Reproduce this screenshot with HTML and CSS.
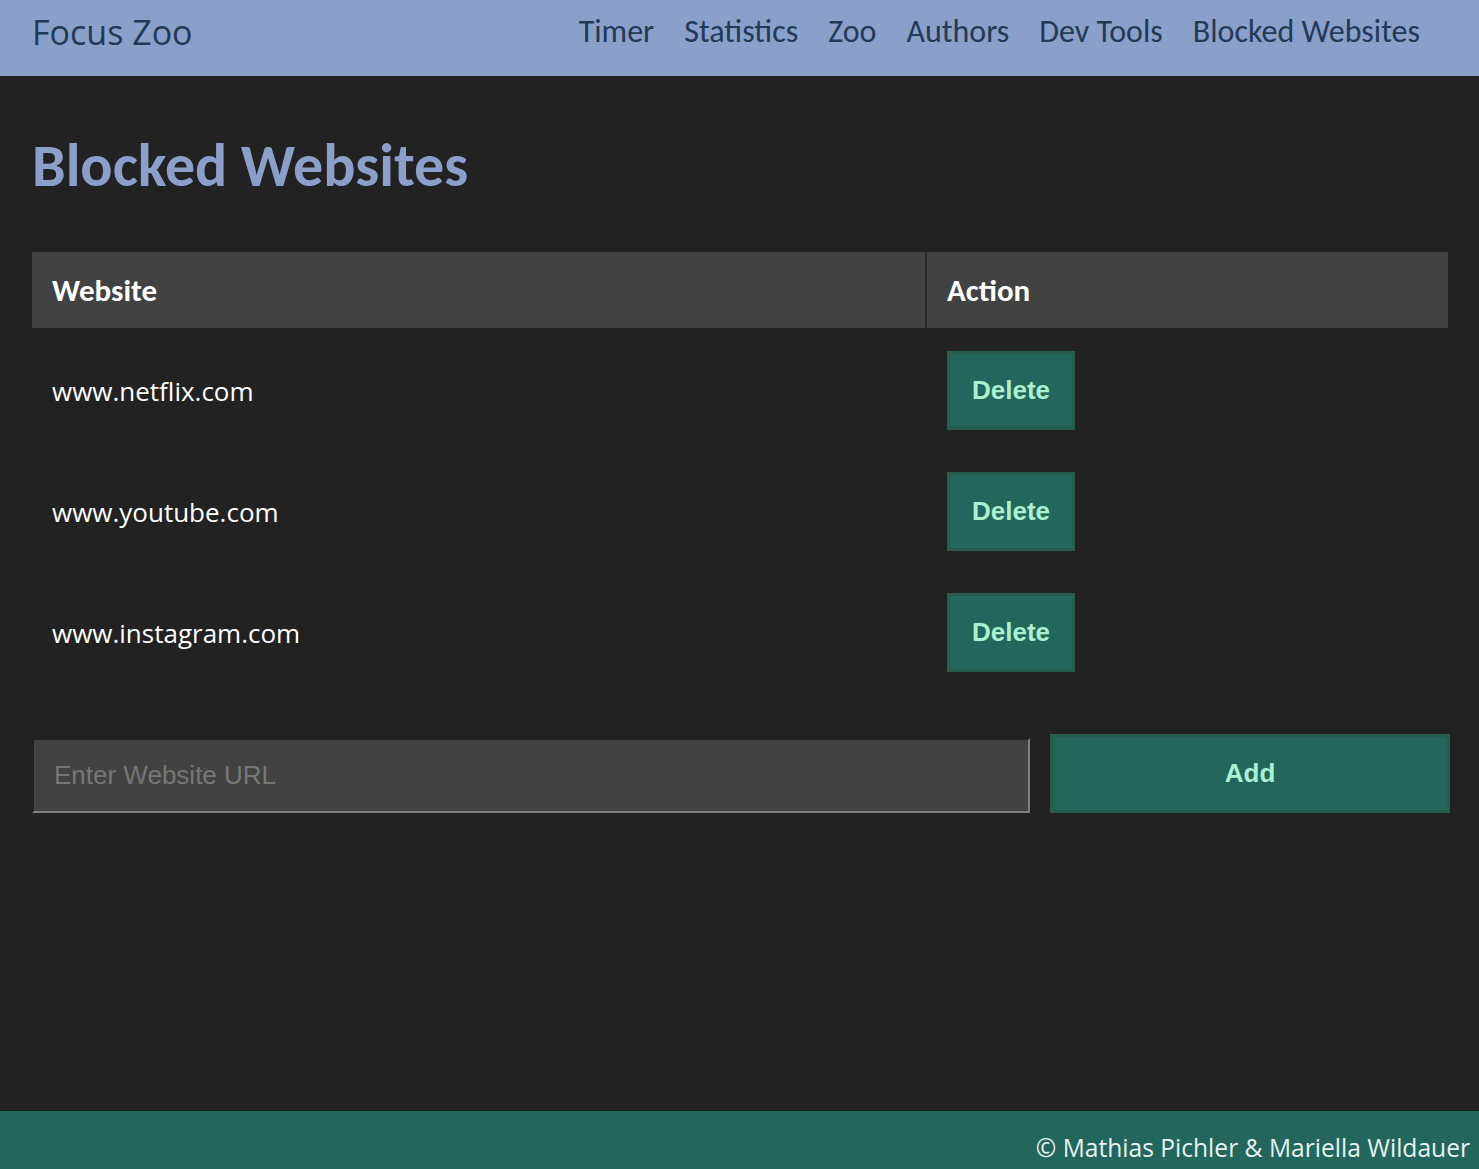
FILE: index.html
```html
<!DOCTYPE html>
<html lang="en">
<head>
<meta charset="utf-8">
<title>Focus Zoo - Blocked Websites</title>
<link rel="stylesheet" href="styles.css">
</head>
<body>
<div class="page">
  <header class="topbar">
    <div class="brand">Focus Zoo</div>
    <nav class="nav">
      <a href="#">Timer</a>
      <a href="#">Statistics</a>
      <a href="#">Zoo</a>
      <a href="#">Authors</a>
      <a href="#">Dev Tools</a>
      <a href="#">Blocked Websites</a>
    </nav>
  </header>
  <main class="content">
    <h1 class="title">Blocked Websites</h1>
    <table class="sites">
      <thead>
        <tr><th class="col-site">Website</th><th class="col-action">Action</th></tr>
      </thead>
      <tbody>
        <tr><td class="site">www.netflix.com</td><td><button class="btn btn-delete">Delete</button></td></tr>
        <tr><td class="site">www.youtube.com</td><td><button class="btn btn-delete">Delete</button></td></tr>
        <tr><td class="site">www.instagram.com</td><td><button class="btn btn-delete">Delete</button></td></tr>
      </tbody>
    </table>
    <form class="add-form" onsubmit="return false;">
      <input class="url-input" type="text" placeholder="Enter Website URL">
      <button class="btn btn-add" type="button">Add</button>
    </form>
  </main>
  <footer class="footer">© Mathias Pichler &amp; Mariella Wildauer</footer>
</div>
</body>
</html>
```
FILE: styles.css
```css
* { box-sizing: border-box; }
html, body { margin: 0; padding: 0; }
body {
  background: #222222;
  font-family: "Open Sans", "Noto Sans", sans-serif;
  color: #ffffff;
}
.page {
  min-height: 100vh;
  display: flex;
  flex-direction: column;
}
.topbar {
  height: 76px;
  background: #8a9fca;
  display: flex;
  align-items: center;
  justify-content: space-between;
  padding: 0 59px 0 32px;
}
.brand {
  font-family: "Open Sans", "Noto Sans", sans-serif;
  font-size: 34px;
  color: #233a57;
  line-height: 1;
  margin-top: -12px;
}
.nav {
  display: flex;
  gap: 30px;
  margin-top: -12px;
}
.nav a {
  font-family: Carlito, Lato, sans-serif;
  font-size: 32px;
  line-height: 1;
  color: #233a57;
  text-decoration: none;
}
.content {
  flex: 1;
  padding: 0 29px 0 32px;
}
.title {
  font-family: Carlito, Lato, sans-serif;
  font-weight: bold;
  font-size: 60px;
  line-height: 1;
  color: #8a9fca;
  margin: 60px 0 56px 0;
}
.sites {
  width: 1416px;
  border-collapse: separate;
  border-spacing: 0;
}
.sites th {
  background: #424242;
  height: 76px;
  text-align: left;
  padding: 0 20px;
  font-family: Carlito, Lato, sans-serif;
  font-size: 31px;
  font-weight: bold;
  color: #ffffff;
}
.sites .col-site { width: 895px; border-right: 2px solid #2a2a2a; }
.sites td {
  padding: 23px 20px 19px 20px;
  height: 121px;
}
.site {
  font-family: "Open Sans", "Noto Sans", sans-serif;
  font-size: 26px;
  color: #ffffff;
}
.btn {
  background: #22665c;
  border: 3px solid #275d4b;
  color: #aaf0d1;
  font-family: "Liberation Sans", Arial, sans-serif;
  font-weight: bold;
  font-size: 26px;
  cursor: pointer;
}
.btn-delete {
  width: 128px;
  height: 79px;
  padding: 0;
}
.add-form {
  display: flex;
  align-items: flex-end;
  gap: 20px;
  margin-top: 43px;
}
.url-input {
  flex: 0 0 998px;
  height: 75px;
  background: #424242;
  border-style: solid;
  border-width: 2px;
  border-color: #222222 #7f7f7f #7f7f7f #222222;
  padding: 0 20px;
  font-family: "Liberation Sans", Arial, sans-serif;
  font-size: 26px;
  color: #ffffff;
}
.url-input::placeholder { color: #777777; }
.btn-add {
  flex: 0 0 400px;
  height: 79px;
}
.footer {
  height: 58px;
  background: #22665c;
  color: #e8f2f2;
  font-family: "Open Sans", "Noto Sans", sans-serif;
  font-size: 24.6px;
  line-height: 1;
  text-align: right;
  padding: 25px 9px 0 0;
}
```
